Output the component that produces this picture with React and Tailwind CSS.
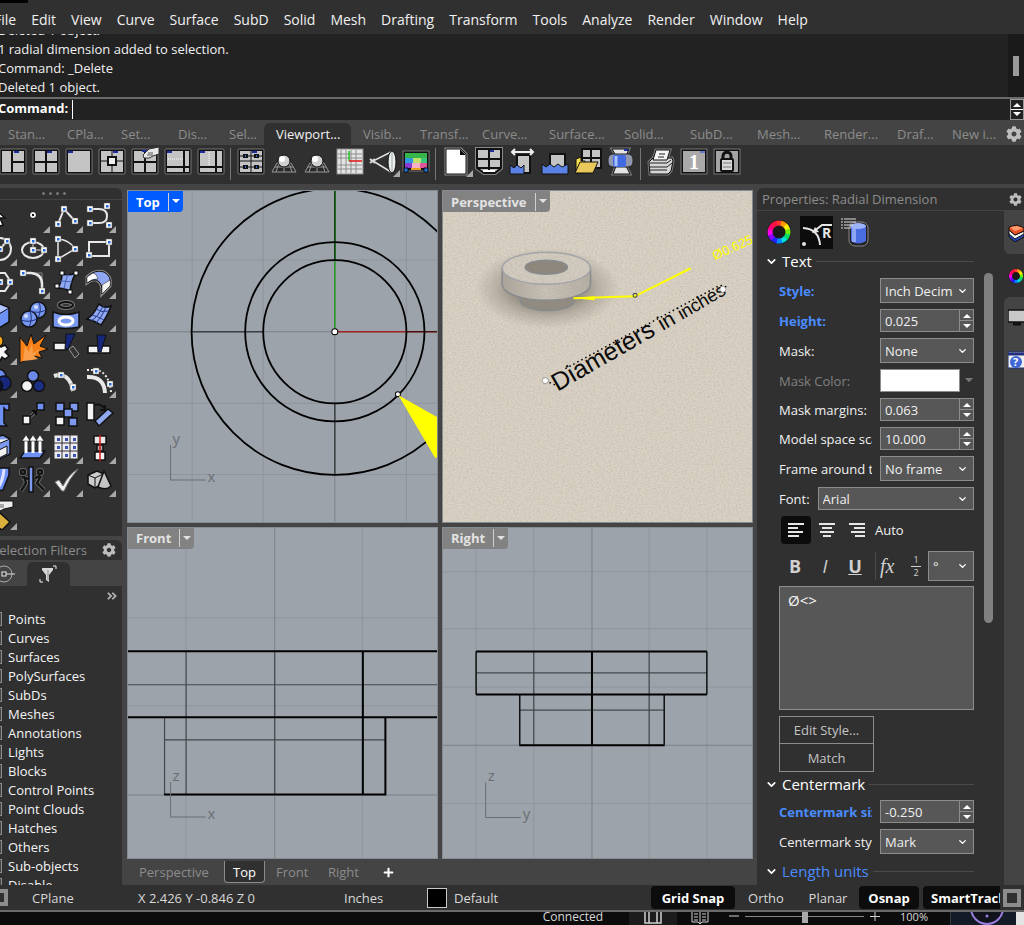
import React from "react";
import { FaCog, FaPlus, FaAngleDoubleRight } from "react-icons/fa";
import { ChevronDown } from "lucide-react";

const menuItems = [
  "File", "Edit", "View", "Curve", "Surface", "SubD", "Solid", "Mesh", "Drafting",
  "Transform", "Tools", "Analyze", "Render", "Window", "Help",
];

const toolbarTabs = [
  { label: "Stan...", width: "w-[59px]" },
  { label: "CPla...", width: "w-[54px]" },
  { label: "Set...", width: "w-[57px]" },
  { label: "Dis...", width: "w-[51px]" },
  { label: "Sel...", width: "w-[35px]" },
  { label: "Viewport...", width: "w-[87px]", active: true },
  { label: "Visib...", width: "w-[57px]" },
  { label: "Transf...", width: "w-[62px]" },
  { label: "Curve...", width: "w-[67px]" },
  { label: "Surface...", width: "w-[75px]" },
  { label: "Solid...", width: "w-[66px]" },
  { label: "SubD...", width: "w-[67px]" },
  { label: "Mesh...", width: "w-[67px]" },
  { label: "Render...", width: "w-[73px]" },
  { label: "Draf...", width: "w-[55px]" },
  { label: "New i...", width: "w-[54px]" },
];

const filters = [
  "Points", "Curves", "Surfaces", "PolySurfaces", "SubDs", "Meshes", "Annotations",
  "Lights", "Blocks", "Control Points", "Point Clouds", "Hatches", "Others",
  "Sub-objects", "Disable",
];

/* ---------- toolbar icons, 28 x 28 ---------- */

function Pane({ children, blue = "M11 3h5" }) {
  return (
    <>
      <rect x="1" y="1" width="26" height="25" rx="1" fill="#111" stroke="#777" />
      <rect x="3" y="3" width="22" height="21" fill="#c4c4c4" />
      <g stroke="#111" strokeWidth="2" fill="none">{children}</g>
      <path d={blue} stroke="#1c2f9c" strokeWidth="2" />
    </>
  );
}

const mainIcons = [
  { name: "Three viewports", art: <Pane blue="M15 4h5"><path d="M13 3v21M13 14h12" /></Pane> },
  { name: "Four viewports", art: <Pane blue="M15 4h5"><path d="M14 3v21M3 14h22" /></Pane> },
  { name: "Maximize viewport", art: <Pane blue="M3 4h5" /> },
  {
    name: "New viewport",
    art: (
      <Pane blue="M15 4h5">
        <path d="M14 3v21M3 13h22" strokeWidth="1" />
        <rect x="10" y="9" width="8" height="8" fill="#eee" />
      </Pane>
    ),
  },
  {
    name: "Viewport layout",
    art: (
      <>
        <Pane><path d="M14 3v21M3 14h22" /></Pane>
        <path d="M12 7l6-6 10-2v7l-6 2-4 2h-5z" fill="#e8e8e8" stroke="#333" />
        <path d="M16 7h6M17 5h5" stroke="#555" />
      </>
    ),
  },
  {
    name: "Split horizontally",
    art: (
      <Pane blue="M3 4h5">
        <path d="M20 3v21M3 19h22" />
        <path d="M4 11h15" stroke="#fff" strokeWidth="1" strokeDasharray="1 1" />
      </Pane>
    ),
  },
  {
    name: "Split vertically",
    art: (
      <Pane blue="M3 4h5">
        <path d="M19 3v21M3 19h22" />
        <path d="M12 4v14" stroke="#fff" strokeWidth="1" strokeDasharray="1 1" />
      </Pane>
    ),
  },
  null,
  {
    name: "Viewport properties",
    art: (
      <Pane blue="M15 4h5">
        <path d="M3 8h22M3 13h22M3 19h22M14 3v21" strokeWidth="1" />
        <path d="M6 8h5M17 8h5M6 19h5M17 19h5" strokeWidth="4" />
        <path d="M8 8h1M19 8h1M8 19h1M19 19h1" stroke="#3b6fd8" />
      </Pane>
    ),
  },
  { name: "Camera orbit", art: <OrbitBall /> },
  { name: "Camera target", art: <OrbitBall /> },
  {
    name: "Grid",
    art: (
      <>
        <rect x="1" y="1" width="26" height="25" fill="#e4e4e4" stroke="#888" />
        <path d="M5 2v23M10 2v23M15 2v23M20 2v23M2 6h24M2 10h24M2 17h24M2 21h24" stroke="#8c8c8c" />
        <path d="M13 3v10" stroke="#1fc51f" strokeWidth="1.500" />
        <path d="M13 13h13" stroke="#e01414" strokeWidth="1.500" />
      </>
    ),
  },
  {
    name: "Lens length",
    corner: true,
    art: (
      <>
        <path d="M22 4L4 13l18 11" stroke="#ddd" fill="none" strokeWidth="1.500" />
        <path d="M1 11l5 4M1 15l5-4" stroke="#ddd" strokeWidth="2" />
        <ellipse cx="23" cy="14" rx="4" ry="11" fill="#eee" stroke="#111" />
        <path d="M23 4v20" stroke="#9aa" />
      </>
    ),
  },
  {
    name: "Background bitmap",
    art: (
      <>
        <rect x="1" y="3" width="26" height="20" fill="#111" stroke="#777" />
        <rect x="3" y="5" width="22" height="5" fill="#35b54a" />
        <rect x="3" y="10" width="8" height="5" fill="#2f9adf" />
        <rect x="11" y="10" width="8" height="5" fill="#bfe26a" />
        <rect x="19" y="10" width="6" height="5" fill="#38c77c" />
        <rect x="3" y="15" width="7" height="5" fill="#8a3bd0" />
        <rect x="10" y="15" width="8" height="5" fill="#f3b3c4" />
        <rect x="18" y="15" width="7" height="5" fill="#e0559a" />
        <path d="M9 21h10" stroke="#e8a21c" strokeWidth="2" />
        <path d="M2 20h4v4H2zM22 20h4v4h-4z" fill="#1976e8" stroke="#111" />
      </>
    ),
  },
  null,
  {
    name: "New page",
    corner: true,
    art: (
      <>
        <path d="M4 1h15l5 5v20H4z" fill="#fff" stroke="#888" strokeWidth="3" />
        <path d="M4 1h15l5 5v20H4z" fill="#fff" stroke="#111" />
        <path d="M18 1v6h6" fill="#111" />
      </>
    ),
  },
  {
    name: "Four view page",
    art: (
      <>
        <path d="M2 1h24v19l-6 5H9l-7-5z" fill="none" stroke="#888" strokeWidth="4" />
        <path d="M2 1h24v19l-6 5H9l-7-5z" fill="#c4c4c4" stroke="#111" strokeWidth="2" />
        <path d="M14 1v21M2 11h24M2 20h24" stroke="#111" strokeWidth="2" />
        <path d="M15 3h4" stroke="#1c2f9c" strokeWidth="2" />
        <path d="M8 23h12" stroke="#fff" strokeWidth="2" />
      </>
    ),
  },
  {
    name: "Pan linked",
    art: (
      <>
        <rect x="9" y="7" width="13" height="18" fill="#c4c4c4" stroke="#111" strokeWidth="2" />
        <path d="M2 17l4 3 3-3 4 3 3-3v9H2z" fill="#5a82e6" stroke="#111" />
        <path d="M4 4h21M7 1L4 4l3 3M22 1l3 3-3 3" stroke="#eee" strokeWidth="2" fill="none" />
      </>
    ),
  },
  {
    name: "Page bounds",
    art: (
      <>
        <rect x="9" y="6" width="15" height="14" fill="#c4c4c4" stroke="#111" strokeWidth="2" />
        <path d="M1 16l4 3 4-3 4 3 4-3 4 3 6-3v10H1z" fill="#5a82e6" stroke="#111" />
      </>
    ),
  },
  {
    name: "Open layout",
    art: (
      <>
        <path d="M8 1h19v19H8z" fill="#c4c4c4" stroke="#111" strokeWidth="2" />
        <path d="M17 1v18M8 10h19" stroke="#111" strokeWidth="2" />
        <path d="M2 11l5-2v4h4v12H2z" fill="#f7e04c" stroke="#111" />
        <path d="M6 14h18l-5 11H1z" fill="#e9c85c" stroke="#111" />
      </>
    ),
  },
  {
    name: "Clip viewport",
    art: (
      <>
        <path d="M5 1h17l-3 7v10l4 8H6l3-8V8z" fill="#e4e4e4" stroke="#777" strokeWidth="3" />
        <path d="M5 1h17l-3 7v10l4 8H6l3-8V8z" fill="#e4e4e4" stroke="#111" />
        <rect x="1" y="6" width="25" height="13" rx="5" fill="#9298ac" stroke="#222" />
        <rect x="6" y="7" width="13" height="12" rx="2" fill="#4169e1" />
        <path d="M9 8v10" stroke="#a9c0ff" strokeWidth="3" />
        <path d="M17 2h4" stroke="#1c2f9c" strokeWidth="2" />
      </>
    ),
  },
  null,
  {
    name: "Print",
    art: (
      <>
        <path d="M9 2h14l-3 10H6z" fill="#f4f4f4" stroke="#777" strokeWidth="3" />
        <path d="M2 14l4-4h19l1 3-2 10-3 3H3z" fill="#d6d6d6" stroke="#777" strokeWidth="3" />
        <path d="M2 14l4-4h19l1 3-2 10-3 3H3z" fill="#d6d6d6" stroke="#111" />
        <path d="M9 2h14l-3 10H6z" fill="#f4f4f4" stroke="#111" />
        <path d="M3 15h17l4-3M3 19h17l5-4M3 22h17M12 6h6M11 9h6" stroke="#222" fill="none" />
      </>
    ),
  },
  {
    name: "One to one scale",
    art: (
      <>
        <rect x="1" y="1" width="26" height="25" fill="#111" stroke="#777" />
        <rect x="3" y="3" width="22" height="21" fill="#a9a9a9" />
        <text x="9" y="21" fontSize="20" fontWeight="700" fill="#fff" fontFamily="Liberation Serif, serif">1</text>
        <path d="M20 4h5" stroke="#1d49e0" />
      </>
    ),
  },
  {
    name: "Lock viewport",
    art: (
      <>
        <rect x="1" y="1" width="26" height="25" fill="#111" stroke="#777" />
        <rect x="3" y="3" width="22" height="21" fill="#a4a4a4" />
        <path d="M10 12V8c0-5 8-5 8 0v4" stroke="#111" strokeWidth="3" fill="none" />
        <rect x="8" y="11" width="12" height="12" rx="1" fill="#d8d8d8" stroke="#111" strokeWidth="2" />
        <path d="M10 15h8M10 19h8" stroke="#777" />
      </>
    ),
  },
];

function OrbitBall() {
  return (
    <>
      <path d="M7 15h14l5 9H2z" fill="#2a2a2a" stroke="#999" />
      <path d="M5 19h18M9 15l-3 9M14 15v9M19 15l3 9" stroke="#999" />
      <circle cx="14" cy="13" r="6" fill="#d0d0d0" stroke="#111" />
      <circle cx="12" cy="11" r="3" fill="#fff" />
    </>
  );
}

function Corner() {
  return <path d="M33 26v7h-7z" fill="#a8a8a8" />;
}

function Node({ x, y }) {
  return (
    <>
      <rect x={x - 3} y={y - 3} width="6" height="6" fill="#fff" stroke="#555" strokeWidth="0.500" />
      <rect x={x - 1} y={y - 1} width="2.500" height="2.500" fill="#2468d8" />
    </>
  );
}

/* ---------- side palette icons, 33 x 33 ---------- */

const line = { stroke: "#e8e8e8", strokeWidth: 2, fill: "none" };
const edge = { stroke: "#111", strokeWidth: 1.5 };

const paletteIcons = [
  [null, "Select", <path d="M10 8l11 10h-5l3 7-3 1-3-6-3 4z" fill="#fff" {...edge} />],
  [1, "Point", <><circle cx="16" cy="15" r="3.500" fill="#fff" stroke="#111" /><circle cx="16" cy="15" r="1.200" fill="#111" /></>],
  [1, "Polyline", <><path d="M8 24l6-15 11 12" {...line} /><Node x={8} y={24} /><Node x={14} y={9} /><Node x={25} y={21} /></>],
  [1, "Curve", <><path d="M7 9h9c6 0 8 3 8 7s-2 7-8 7H7" {...line} /><Node x={7} y={9} /><Node x={24} y={6} /><Node x={7} y={23} /><Node x={26} y={25} /></>],
  [1, "Circle", <><circle cx="16" cy="16" r="11" {...line} /><path d="M16 16l7-8" {...line} /><Node x={16} y={16} /><Node x={23} y={8} /></>],
  [1, "Ellipse", <><ellipse cx="16" cy="17" rx="11" ry="8" {...line} /><path d="M16 8v9h11" {...line} strokeWidth="1" /><Node x={16} y={17} /><Node x={16} y={8} /><Node x={27} y={17} /></>],
  [1, "Arc", <><path d="M8 26V6Q20 7 25 16L8 26" {...line} strokeWidth="1.500" /><Node x={8} y={6} /><Node x={25} y={16} /><Node x={8} y={26} /></>],
  [1, "Rectangle", <><rect x="6" y="9" width="20" height="14" {...line} /><Node x={26} y={9} /><Node x={6} y={22} /></>],
  [1, "Polygon", <><path d="M10 7h11l6 9-6 9H10l-5-9z" {...line} /><Node x={16} y={16} /><Node x={26} y={16} /></>],
  [1, "Fillet", <><path d="M8 7h17v16" stroke="#888" fill="none" /><path d="M6 7h8q11 1 11 11v7" {...line} strokeWidth="2.500" /><Node x={6} y={7} /><Node x={25} y={25} /></>],
  [1, "Surface", <>
    <path d="M12 8q7 2 14-1-5 8-6 18-6-3-12-3 4-7 4-14z" fill="#8fa8f0" {...edge} />
    <path d="M18 8q-3 8-4 15M10 15q6 0 12 1" stroke="#4560b8" fill="none" />
    {[[12, 7], [26, 7], [7, 20], [20, 26]].map(([x, y]) => <rect key={x} x={x - 2} y={y - 2} width="4" height="4" fill="#fff" stroke="#111" />)}
  </>],
  [1, "Sweep", <>
    <path d="M4 11q8-8 17-5 8 4 6 14l-8 8q1-12-6-14-4-1-9 3z" fill="#8fa6f2" stroke="#888" strokeWidth="3" />
    <path d="M4 11q8-8 17-5 8 4 6 14l-8 8q1-12-6-14-4-1-9 3z" fill="#8fa6f2" stroke="#111" />
    <path d="M4 11l6-4q4 1 5 6-5-1-11 4z" fill="#fff" stroke="#111" strokeWidth="0.500" />
    <path d="M19 19l8-5q1 3 0 6l-8 8z" fill="#f4f4f4" stroke="#111" strokeWidth="0.500" />
  </>],
  [1, "Box", <><path d="M6 11l10-6 9 4v14l-10 6-9-5z" fill="#6d90f5" {...edge} /><path d="M6 11l9 4 10-6M15 15v14" stroke="#111" fill="none" /><path d="M7 11l9-5 8 3-9 5z" fill="#b5c6ff" /></>],
  [1, "Sphere union", <>
    <circle cx="21" cy="11" r="8" fill="#7897ee" {...edge} /><circle cx="12" cy="20" r="8" fill="#7897ee" {...edge} />
    <path d="M13 12q8 3 16-1M22 3q3 8-1 16M4 21q8 3 16-1M13 12q3 8-1 16" stroke="#22357f" fill="none" />
    <circle cx="19" cy="8" r="2" fill="#d5deff" /><circle cx="9" cy="17" r="2" fill="#d5deff" />
  </>],
  [1, "Project", <>
    <ellipse cx="16" cy="6" rx="7" ry="3" fill="none" stroke="#777" strokeWidth="4" /><ellipse cx="16" cy="6" rx="7" ry="3" fill="none" stroke="#111" strokeWidth="2" />
    <path d="M3 13q13 5 26 0v15q-13 3-26 0z" fill="#7897ee" {...edge} />
    <ellipse cx="16" cy="22" rx="7" ry="4" fill="none" stroke="#fff" strokeWidth="3" />
  </>],
  [1, "Mesh", <><path d="M4 20q6-3 12-15 5 5 12 2-3 9-10 19-6-4-14-6z" fill="#8fa8f0" {...edge} /><path d="M8 22q7-4 12-15M13 24q6-6 10-16M13 10q6 4 12 2M9 16q5 1 12 5" stroke="#26398a" fill="none" /></>],
  [1, "Puzzle", <><circle cx="13" cy="9" r="6" fill="#f5a414" stroke="#111" /><path d="M9 14l5-3 3 4 4-2 3 4-3 3 4 4-4 3-3-2-2 4-5-2z" fill="#f4f4f4" {...edge} /></>],
  [null, "Explode", <><path d="M3 31L3 5l7 9 4-12 3 10 12-9-6 11 8 3-9 3 3 6-8-2z" fill="#f68018" stroke="#111" /><path d="M6 29l2-15 4 6 3-8 1 9 7-4-6 7 4 3-6 1z" fill="#fba04a" /></>],
  [null, "Trim", <><path d="M4 11h13v7H4z" fill="#f2f2f2" {...edge} /><path d="M16 2h9l-7 15h-3z" fill="#17277c" stroke="#111" /><path d="M19 17l4-3 6 8-4 4z" fill="#333" stroke="#999" /></>],
  [null, "Split", <><path d="M5 14h22v7H5z" fill="#f2f2f2" {...edge} /><path d="M14 3h9l-5 17h-3z" fill="#17277c" stroke="#111" /></>],
  [1, "Boolean", <><circle cx="14" cy="12" r="8" fill="#6d90f5" {...edge} /><circle cx="20" cy="18" r="7" fill="#17277c" {...edge} /><circle cx="12" cy="21" r="7" fill="#0b1026" stroke="#111" /></>],
  [null, "Group", <><circle cx="16" cy="11" r="5.500" fill="#6d8ae8" {...edge} /><circle cx="10" cy="21" r="5.500" fill="#f2f2f2" {...edge} /><circle cx="22" cy="21" r="5.500" fill="#1b2f86" {...edge} /></>],
  [null, "Edit points", <><path d="M4 11Q19 6 23 26" {...line} strokeWidth="4" /><Node x={11} y={10} /><Node x={23} y={22} /></>],
  [1, "Offset points", <><path d="M4 12q17-1 18 16" {...line} strokeWidth="4" /><path d="M4 5h10q12 3 14 22" stroke="#eee" fill="none" strokeDasharray="2 2" strokeWidth="2" /><Node x={13} y={6} /><Node x={27} y={19} /></>],
  [null, "Text object", <><path d="M6 6h19v6h-3l-2-2v15l3 3H12l3-3V10h-4l-2 3H6z" fill="#6d90f5" {...edge} /></>],
  [1, "Copy", <><path d="M10 22L22 10" stroke="#888" strokeWidth="3" /><path d="M10 22L22 10M15 13l5-1-1 5" stroke="#111" strokeWidth="1.500" /><rect x="6" y="18" width="7" height="8" fill="#f2f2f2" {...edge} /><rect x="20" y="5" width="7" height="7" fill="#6d90f5" {...edge} /></>],
  [null, "Array", <>{[[6, 5], [20, 5], [14, 11], [6, 19], [19, 20]].map(([x, y], i) => <rect key={i} x={x} y={y} width="8" height="8" fill={i === 3 ? "#f2f2f2" : "#7d9af0"} {...edge} />)}</>],
  [null, "Rotate", <><rect x="4" y="5" width="7" height="17" fill="#f2f2f2" {...edge} /><path d="M25 11l5 4-14 13-4-5z" fill="#8fa8f0" {...edge} /><path d="M12 7q6-2 10 4M22 7v5h-5" stroke="#111" strokeWidth="2" fill="none" /></>],
  [1, "Solid edit", <><path d="M5 9l14-5 7 4v15l-12 6-9-4z" fill="#7d9af0" {...edge} /><path d="M15 19l8-4v8l-8 4zM5 9l9 4 12-5" fill="#f2f2f2" stroke="#111" /></>],
  [1, "Extrude", <><path d="M8 20h20l-5 7H3z" fill="#6d90f5" {...edge} /><path d="M9 22V8M16 22V8M23 22V8" stroke="#fff" strokeWidth="3" /><path d="M5 10l4-6 4 6zM12 10l4-6 4 6zM19 10l4-6 4 6z" fill="#fff" stroke="#111" strokeWidth="0.500" /></>],
  [1, "Grid array", <>{[0, 1, 2].map((r) => [0, 1, 2].map((c) => <g key={r * 3 + c}><rect x={5 + c * 8} y={5 + r * 8} width="6" height="6" fill="#e9e9f5" stroke="#eee" /><rect x={7 + c * 8} y={7 + r * 8} width="3" height="3" fill="#3b50b0" /></g>))}</>],
  [1, "Align", <><rect x="11" y="5" width="12" height="8" fill="#e8e8e8" {...edge} /><rect x="14" y="14" width="6" height="6" fill="#aaa" {...edge} /><rect x="12" y="21" width="10" height="8" fill="#f2f2f2" {...edge} /><path d="M17 4v26" stroke="#d01818" strokeWidth="1.500" /></>],
  [1, "Bend", <><path d="M12 4h13v7l-6 15-7 1-7-7q7-6 7-16z" fill="#6d90f5" {...edge} /><path d="M20 5q-1 14-8 21" stroke="#dbe3ff" strokeWidth="3" fill="none" /></>],
  [1, "Analyze", <>
    <g stroke="#777" strokeWidth="4" fill="none"><circle cx="6" cy="8" r="2" /><circle cx="23" cy="8" r="2" /><path d="M5 13l7 2M7 12l2 7-5 8M24 12l-4 7 7 7M18 14l5-2" /></g>
    <g stroke="#161616" strokeWidth="2.500" fill="none"><circle cx="6" cy="8" r="2" /><circle cx="23" cy="8" r="2" /><path d="M5 13l7 2M7 12l2 7-5 8M24 12l-4 7 7 7M18 14l5-2" /></g>
    <rect x="12" y="3" width="4" height="25" fill="#7d9af0" {...edge} />
  </>],
  [1, "Check", <path d="M5 18l4-2 4 6q6-12 15-17-9 10-14 22h-2z" fill="#f0f0f0" stroke="#777" />],
  [1, "Shaded solids", <><path d="M5 11l9-4 7 3v9l-9 5-7-4z" fill="#ccc" {...edge} /><path d="M5 11l7 3 8-4M12 14v9" stroke="#111" fill="none" /><path d="M21 7l7 15q-5 5-13 1z" fill="#c4c4c4" {...edge} /></>],
  [1, "Pick tool", <><path d="M7 26l9-10 10 9-8 8z" fill="#d9b03c" {...edge} /><path d="M10 9l6-5h13v6l-9 2-4 2z" fill="#eee" stroke="#111" /><path d="M14 8h6M15 10h5" stroke="#666" /></>],
];

/* ---------- small shared bits ---------- */

function Caret({ className }) {
  return (
    <svg viewBox="0 0 10 6" className={className} aria-hidden="true">
      <path d="M0 0h10L5 5z" fill="currentColor" />
    </svg>
  );
}

function ColorWheel({ className }) {
  const hues = ["#f33", "#f90", "#fe0", "#7e0", "#0d6", "#0dd", "#08f", "#22f", "#80f", "#f0e", "#f07", "#f14"];
  return (
    <svg viewBox="-13 -13 26 26" className={className} aria-hidden="true">
      <circle r="12" fill="#181818" />
      {hues.map((h, i) => (
        <path key={h} d="M-2.700 -8.600A9 9 0 0 1 2.700 -8.600" stroke={h} strokeWidth="5" fill="none" transform={`rotate(${i * 30})`} />
      ))}
    </svg>
  );
}

function SectionTitle({ children, color = "text-white" }) {
  return (
    <h3 className={`flex h-6 items-center gap-1 pl-2 text-[15px] ${color}`}>
      <ChevronDown size={13} strokeWidth={3} className="shrink-0 text-white" />
      <span className="shrink-0">{children}</span>
      <span className="h-px flex-1 bg-[#4a4a4a]" />
    </h3>
  );
}

function Field({ id, label, labelColor = "text-[#f0f0f0]", children }) {
  return (
    <div className="flex items-center gap-2">
      <label htmlFor={id} className={`w-[93px] shrink-0 overflow-hidden whitespace-nowrap ${labelColor}`}>
        {label}
      </label>
      {children}
    </div>
  );
}

function Picker({ id, value, height = "h-[25px]", label }) {
  return (
    <div className="relative min-w-0 flex-1">
      <select
        id={id}
        aria-label={label}
        className={`block w-full appearance-none overflow-hidden border border-[#8c8c8c] bg-[#575757] pr-5 pl-1 text-[#f0f0f0] ${height}`}
      >
        <option>{value}</option>
      </select>
      <ChevronDown size={11} strokeWidth={3} className="pointer-events-none absolute top-1/2 right-1.5 -translate-y-1/2 text-white" />
    </div>
  );
}

function Spinner({ id, value }) {
  return (
    <div className="flex h-[23px] min-w-0 flex-1 border border-[#8c8c8c] bg-[#575757]">
      <input id={id} type="text" defaultValue={value} className="w-0 flex-1 pl-1 text-[#f0f0f0] outline-none" />
      <div className="flex w-3.5 flex-col border-l border-[#8c8c8c]">
        <button aria-label="Increase" className="flex flex-1 items-center justify-center border-b border-[#8c8c8c]">
          <Caret className="h-[5px] w-2 rotate-180 text-white" />
        </button>
        <button aria-label="Decrease" className="flex flex-1 items-center justify-center">
          <Caret className="h-[5px] w-2 text-white" />
        </button>
      </div>
    </div>
  );
}

/* ---------- viewports ---------- */

function Viewport({ title, active, viewBox, children }) {
  return (
    <section className="relative min-h-0 min-w-0 overflow-hidden border border-[#858b92] bg-[#9ca3ab]">
      <svg viewBox={viewBox} preserveAspectRatio="xMinYMin slice" className="block h-full w-full">
        {children}
      </svg>
      <button
        className={`absolute top-0 left-0 flex h-[21px] items-center rounded-br-sm font-bold ${
          active ? "bg-[#005cff] text-white" : "bg-[#828282] text-[#e2e2e2]"
        }`}
      >
        <span className="px-2">{title}</span>
        <span className="flex h-[18px] items-center border-l border-[#d0d0d0] px-[3px]">
          <Caret className="h-[5px] w-2" />
        </span>
      </button>
    </section>
  );
}

function AxisMark({ x, y, h, v }) {
  return (
    <>
      <path d={`M${x} ${y - 35}v35h35`} stroke="#6b6f74" fill="none" />
      <text x={x + 2} y={y - 36} fontSize="15" fill="#6b6f74">{v}</text>
      <text x={x + 37} y={y + 2} fontSize="15" fill="#6b6f74">{h}</text>
    </>
  );
}

function TopView() {
  return (
    <Viewport title="Top" active viewBox="128 192 310 330">
      <path d="M192 192v330M263 192v330M406 192v330M128 261h310M128 404h310M128 475h310" stroke="#8e959c" />
      <path d="M334.500 192v330M128 332.500h310" stroke="#7c8187" />
      <path d="M192 332.500h71M334.500 404v71" stroke="#3c3f42" strokeWidth="1.500" />
      <path d="M334.500 192v140" stroke="#239a23" strokeWidth="1.500" />
      <path d="M334.500 192v70" stroke="#0b400b" strokeWidth="1.500" />
      <path d="M334.500 332.500h72" stroke="#9d2323" strokeWidth="1.500" />
      <path d="M406 332.500h32" stroke="#520b0b" strokeWidth="1.500" />
      <g fill="none" stroke="#000" strokeWidth="1.800">
        <circle cx="334.500" cy="332.500" r="143" />
        <circle cx="334.500" cy="332.500" r="89.500" />
        <circle cx="334.500" cy="332.500" r="71.500" />
      </g>
      <circle cx="334.500" cy="332.500" r="3" fill="#fff" stroke="#000" />
      <circle cx="397.500" cy="395" r="2.500" fill="#fff" stroke="#000" />
      <path d="M398 396l41 23v35l-4 5z" fill="#ff0" />
      <AxisMark x={170.5} y={480.5} h="x" v="y" />
    </Viewport>
  );
}

function PerspectiveView() {
  return (
    <Viewport title="Perspective" viewBox="444 192 308 330">
      <defs>
        <filter id="paper" x="0" y="0" width="100%" height="100%">
          <feTurbulence type="fractalNoise" baseFrequency="0.500 0.700" numOctaves="3" seed="4" />
          <feColorMatrix values="0 0 0 0 0.350  0 0 0 0 0.310  0 0 0 0 0.250  0.600 0 0 0 -0.210" />
        </filter>
        <radialGradient id="shadow">
          <stop offset="0.300" stopColor="#3a342c" stopOpacity="0.600" />
          <stop offset="0.700" stopColor="#3a342c" stopOpacity="0.200" />
          <stop offset="1" stopColor="#3a342c" stopOpacity="0" />
        </radialGradient>
        <linearGradient id="rim">
          <stop offset="0" stopColor="#aba69d" />
          <stop offset="0.500" stopColor="#c9c2b6" />
          <stop offset="1" stopColor="#b5afa5" />
        </linearGradient>
      </defs>
      <rect x="444" y="192" width="308" height="330" fill="#dad2c4" />
      <ellipse cx="548" cy="289" rx="72" ry="40" fill="url(#shadow)" />
      <g stroke="#85898e" strokeWidth="1.500">
        <path d="M521 294v7a27 10 0 0 0 54 0v-7z" fill="#8f897f" />
        <path d="M503 269v16a44 16 0 0 0 88 0v-16z" fill="url(#rim)" />
        <ellipse cx="547" cy="269" rx="44" ry="16" fill="#d3ccc0" stroke="#a2a5ab" />
        <ellipse cx="547" cy="268" rx="21" ry="7" fill="#8b857b" />
      </g>
      <rect x="444" y="192" width="308" height="330" filter="url(#paper)" />
      <path d="M574 299l61-2 56-28" stroke="#ff0" strokeWidth="2" fill="none" />
      <path d="M574 299l21-2v4z" fill="#ff0" />
      <circle cx="635.500" cy="296" r="2" fill="none" stroke="#444" />
      <text x="715" y="261" fontSize="13" fill="#ff0" fontFamily="Liberation Sans, sans-serif" transform="rotate(-24 715 261)">Ø0.625</text>
      <g fontFamily="Liberation Sans, sans-serif" fill="#0a0a0a" transform="rotate(-30 560 391)">
        <text x="558" y="391">
          <tspan fontSize="25">Diameters </tspan>
          <tspan fontSize="21">in </tspan>
          <tspan fontSize="18">inches</tspan>
        </text>
      </g>
      <path d="M546 381l20 9M566 369L720 286l8 2" stroke="#000" strokeWidth="1.500" fill="none" strokeDasharray="1.500 3" />
      <circle cx="546" cy="381" r="3" fill="#fff" stroke="#555" strokeWidth="0.500" />
      <circle cx="723" cy="290" r="3" fill="#fff" stroke="#555" strokeWidth="0.500" />
    </Viewport>
  );
}

function FrontView() {
  return (
    <Viewport title="Front" viewBox="128 528 310 330">
      <path d="M186 528v330M362 528v330M128 617.500h310M128 705.500h310" stroke="#8e959c" />
      <path d="M274.500 528v330M128 794.500h310" stroke="#7c8187" />
      <path d="M186 651v143M128 684.500h310M164.500 717v77M164 739.500h221M274.500 651v143" stroke="#45484c" strokeWidth="1.200" fill="none" />
      <path d="M128 651h310M128 717h310M362.500 651v143M164 794h221v-77" stroke="#000" strokeWidth="2" fill="none" />
      <AxisMark x={170.5} y={816.5} h="x" v="z" />
    </Viewport>
  );
}

function RightView() {
  return (
    <Viewport title="Right" viewBox="444 528 308 330">
      <path d="M477 528v330M534.500 528v330M649.500 528v330M707 528v330M444 571.500h308M444 628.500h308M444 686.500h308M444 802.500h308" stroke="#8e959c" />
      <path d="M592.500 528v330M444 744.500h308" stroke="#7c8187" />
      <path d="M534.500 651v93M649.500 651v93M477 672.500h230M520 709.500h145" stroke="#45484c" strokeWidth="1.200" />
      <path d="M477 651v43M707 651v43M520.500 694v50M664.500 694v50" stroke="#111" strokeWidth="1.500" />
      <path d="M477 651h230M477 694h230M520 744.500h145M592.500 651v93" stroke="#000" strokeWidth="2" />
      <AxisMark x={486.5} y={816.5} h="y" v="z" />
    </Viewport>
  );
}

/* ---------- page regions ---------- */

function MenuBar() {
  return (
    <header className="h-[34px] shrink-0 overflow-hidden bg-[#303030] text-[#f0f0f0]">
      <div className="flex h-1 items-start">
        <span className="h-[3px] w-7 bg-black" />
      </div>
      <nav className="-ml-1.5 flex h-8 items-center gap-[15px] text-sm">
        {menuItems.map((item) => (
          <button key={item} className="shrink-0">{item}</button>
        ))}
      </nav>
    </header>
  );
}

function CommandArea() {
  return (
    <div className="shrink-0 bg-[#222] text-[#f0f0f0]">
      <div className="flex h-[63px]">
        <div className="-ml-1 flex flex-1 flex-col justify-end overflow-hidden pl-0.5 leading-[19px]">
          <p>Deleted 1 object.</p>
          <p>1 radial dimension added to selection.</p>
          <p>Command: _Delete</p>
          <p>Deleted 1 object.</p>
        </div>
        <div className="flex w-4 justify-center bg-[#1a1a1a] pt-[22px]">
          <span className="h-5 w-1.5 bg-[#9a9a9a]" />
        </div>
      </div>
      <div className="flex h-[23px] border-t-2 border-[#6a6a6a]">
        <label htmlFor="command" className="-ml-0.5 leading-[18px] font-bold text-white">Command:</label>
        <input id="command" type="text" className="my-px ml-1 min-w-0 flex-1 border-l border-white outline-none" />
        <div className="flex w-3.5 flex-col border border-[#999]">
          <button aria-label="Previous" className="flex flex-1 items-center justify-center border-b border-white">
            <Caret className="h-[5px] w-2 rotate-180 text-white" />
          </button>
          <button aria-label="Next" className="flex flex-1 items-center justify-center">
            <Caret className="h-[5px] w-2 text-white" />
          </button>
        </div>
      </div>
    </div>
  );
}

function Toolbar() {
  return (
    <div className="shrink-0">
      <div className="flex h-[25px] bg-[#444] pt-[3px] pl-2 text-[#8c8c8c]">
        {toolbarTabs.map((tab) => (
          <button
            key={tab.label}
            className={`shrink-0 text-left whitespace-nowrap ${tab.width} ${
              tab.active ? "mr-3 rounded-t-md bg-[#303030] pl-3 text-[#f0f0f0]" : ""
            }`}
          >
            {tab.label}
          </button>
        ))}
        <button aria-label="Toolbar options" className="text-[#bdbdbd]">
          <FaCog size={16} />
        </button>
      </div>
      <div className="-ml-1 flex h-[39px] bg-[#303030] pt-[3px]">
        {mainIcons.map((item, i) =>
          item ? (
            <button key={item.name} title={item.name} className="flex w-[33px] shrink-0 justify-center">
              <svg viewBox="0 0 28 28" className="h-7 w-7 overflow-visible">
                {item.art}
                {item.corner && <path d="M31 22v7h-7z" fill="#a8a8a8" />}
              </svg>
            </button>
          ) : (
            <span key={i} className="flex w-[7px] shrink-0 justify-center">
              <span className="h-8 w-px bg-[#777]" />
            </span>
          )
        )}
      </div>
    </div>
  );
}

function LeftColumn() {
  return (
    <aside className="flex w-[122px] shrink-0 flex-col gap-1 overflow-hidden pt-1">
      <div className="h-[348px] shrink-0 rounded-tr-md bg-[#303030]">
        <div className="flex h-3 items-center justify-end gap-1 border-b border-[#444] pr-14">
          {[0, 1, 2, 3].map((d) => (
            <span key={d} className="h-[3px] w-[3px] shrink-0 rounded-full bg-[#777]" />
          ))}
        </div>
        <div className="-ml-4 flex w-[132px] flex-wrap">
          {paletteIcons.map(([corner, name, art]) => (
            <button key={name} title={name} className="h-[33px] w-[33px]">
              <svg viewBox="0 0 33 33" className="h-[33px] w-[33px]">
                {art}
                {corner && <Corner />}
              </svg>
            </button>
          ))}
        </div>
      </div>

      <div className="flex min-h-0 flex-1 flex-col overflow-hidden rounded-tr-md bg-[#303030]">
        <div className="-ml-2 flex h-5 shrink-0 items-center justify-between pr-1.5 text-[#8c8c8c]">
          <h2>Selection Filters</h2>
          <FaCog size={14} className="text-[#bdbdbd]" />
        </div>
        <div className="flex h-[26px] shrink-0 bg-[#444] pt-0.5">
          <button aria-label="Object snaps" className="w-[27px]">
            <svg viewBox="0 0 27 24" className="h-6 w-[27px]">
              <circle cx="4" cy="12" r="8" fill="none" stroke="#aaa" />
              <path d="M4 12h11" stroke="#ddd" />
              <rect x="2" y="10" width="4" height="4" fill="#333" stroke="#eee" />
            </svg>
          </button>
          <button aria-label="Selection filter" className="w-[43px] rounded-t-md bg-[#303030] pl-3">
            <svg viewBox="0 0 18 18" className="h-[18px] w-[18px]">
              <path d="M3 3h11v2l-4 5v7l-3-2v-5L3 5z" fill="#d8d8d8" />
              <path d="M9 5v10" stroke="#888" />
              <path d="M14 1h3v3M1 14v3h3" stroke="#eee" fill="none" />
            </svg>
          </button>
        </div>
        <div className="flex h-[23px] shrink-0 items-start justify-end pt-1 pr-1">
          <FaAngleDoubleRight size={12} className="text-[#aaa]" />
        </div>
        <div className="text-[#f5f5f5]">
          {filters.map((f) => (
            <label key={f} className="-ml-3 flex h-[19px] items-center gap-1.5">
              <input type="checkbox" className="h-[14px] w-[14px] shrink-0 appearance-none border border-[#8c8c8c] bg-[#444]" />
              <span className="whitespace-nowrap">{f}</span>
            </label>
          ))}
        </div>
      </div>
    </aside>
  );
}

function ViewportArea() {
  return (
    <main className="flex min-w-0 flex-1 flex-col pt-[6px] pr-1 pl-[5px]">
      <div className="grid min-h-0 flex-1 grid-cols-2 grid-rows-2 gap-1">
        <TopView />
        <PerspectiveView />
        <FrontView />
        <RightView />
      </div>
      <div className="flex h-[26px] shrink-0 items-start pt-0.5 pl-3 text-[#8c8c8c]">
        <button className="h-[22px] w-[85px] text-left">Perspective</button>
        <button className="h-[22px] w-[41px] rounded-b border border-t-0 border-[#8c8c8c] bg-[#303030] text-white">Top</button>
        <button className="h-[22px] w-[52px] pl-[11px] text-left">Front</button>
        <button className="h-[22px] w-[66px] pl-[11px] text-left">Right</button>
        <button aria-label="Add viewport" className="flex h-[22px] items-center">
          <FaPlus size={11} className="text-white" />
        </button>
      </div>
    </main>
  );
}

function AlignIcon({ d }) {
  return (
    <svg viewBox="0 0 16 14" className="h-[14px] w-4" aria-hidden="true">
      <path d={d} stroke="#e6e6e6" strokeWidth="2" />
    </svg>
  );
}

function PropertiesPanel() {
  return (
    <aside className="flex w-[267px] shrink-0 flex-col pt-1">
      <div className="flex h-[23px] shrink-0 items-center rounded-tl-md border-b border-[#444] bg-[#303030] pl-[5px] text-[#8c8c8c]">
        <h2 className="flex-1">Properties: Radial Dimension</h2>
        <FaCog size={13} className="mr-0.5 text-[#bdbdbd]" />
      </div>
      <div className="flex min-h-0 flex-1">
        <div className="flex min-w-0 flex-1 flex-col overflow-hidden bg-[#303030]">
          <div className="flex h-[38px] shrink-0 items-center gap-2 pt-1 pl-[9px]">
            <button aria-label="Display"><ColorWheel className="h-[26px] w-[26px]" /></button>
            <button aria-label="Radial dimension" className="bg-[#0c0c0c]">
              <svg viewBox="0 0 33 33" className="h-[33px] w-[33px]">
                <path d="M3 12q16 1 17 17M13 16l9-7h10" stroke="#e4e4e4" strokeWidth="2" fill="none" />
                <path d="M12 17l3-6 4 5z" fill="#e4e4e4" />
                <circle cx="4" cy="28" r="2" fill="#e4e4e4" />
                <text x="22" y="22" fontSize="14" fontWeight="700" fill="#e4e4e4">R</text>
              </svg>
            </button>
            <button aria-label="Attributes">
              <svg viewBox="0 0 30 30" className="h-[30px] w-[30px]">
                <rect x="8" y="5" width="19" height="24" rx="6" fill="#222" stroke="#888" />
                <path d="M10 9v15q7 5 15 0V9z" fill="#4a6de0" />
                <path d="M13 10v15" stroke="#8ea6f8" strokeWidth="4" />
                <ellipse cx="17" cy="9" rx="8" ry="3" fill="#9db4f8" />
                <path d="M0 2h15M0 5h15M0 8h12M0 11h10" stroke="#ddd" strokeDasharray="2 1 20 0" />
              </svg>
            </button>
          </div>
          <div className="flex min-h-0 flex-1">
            <div className="min-w-0 flex-1">
              <SectionTitle>Text</SectionTitle>
              <div className="flex flex-col gap-1.5 pt-[5px] pl-[22px]">
                <Field id="style" label="Style:" labelColor="font-bold text-[#4a8cff]">
                  <Picker id="style" value="Inch Decimal" />
                </Field>
                <Field id="height" label="Height:" labelColor="font-bold text-[#4a8cff]">
                  <Spinner id="height" value="0.025" />
                </Field>
                <Field id="mask" label="Mask:"><Picker id="mask" value="None" /></Field>
                <Field id="maskcolor" label="Mask Color:" labelColor="text-[#808080]">
                  <button id="maskcolor" className="flex h-[23px] flex-1 items-center text-[#777]">
                    <span className="mr-1 h-full flex-1 border border-[#8c8c8c] bg-white" />
                    <Caret className="h-[5px] w-2.5" />
                  </button>
                </Field>
                <Field id="margins" label="Mask margins:"><Spinner id="margins" value="0.063" /></Field>
                <Field id="scale" label="Model space scale:"><Spinner id="scale" value="10.000" /></Field>
                <Field id="frame" label="Frame around text:"><Picker id="frame" value="No frame" /></Field>
                <div className="flex items-center gap-2">
                  <label htmlFor="font" className="text-[#f0f0f0]">Font:</label>
                  <Picker id="font" value="Arial" height="h-[23px]" />
                </div>
                <div className="flex h-7 items-center text-[#f0f0f0]">
                  <button aria-label="Align left" className="mr-2 ml-0.5 flex h-7 w-[30px] items-center justify-center rounded bg-[#0c0c0c]">
                    <AlignIcon d="M0 1h16M0 5h10M0 9h15M0 13h11" />
                  </button>
                  <button aria-label="Align center" className="mr-3.5">
                    <AlignIcon d="M0 1h16M3 5h10M1 9h14M4 13h8" />
                  </button>
                  <button aria-label="Align right" className="mr-2.5">
                    <AlignIcon d="M0 1h16M5 5h11M2 9h14M6 13h10" />
                  </button>
                  <button>Auto</button>
                </div>
                <div className="flex h-[30px] items-center pt-0.5 text-[#d0d0d0]">
                  <button className="w-8 text-lg font-bold">B</button>
                  <button className="w-7 text-lg italic">I</button>
                  <button className="w-8 text-lg font-bold underline">U</button>
                  <span className="ml-1 h-7 w-px bg-[#4a4a4a]" />
                  <button className="w-7 pl-1 text-left font-[Liberation_Serif,serif] text-xl italic">fx</button>
                  <button aria-label="Fraction" className="flex w-6 shrink-0 flex-col items-center text-[9px] leading-3">
                    <span className="border-b border-[#d0d0d0] px-0.5">1</span>
                    <span>2</span>
                  </button>
                  <Picker label="Symbol" value="°" height="h-[30px]" />
                </div>
                <textarea
                  aria-label="Dimension text"
                  defaultValue="Ø<>"
                  className="h-[124px] resize-none border border-[#8c8c8c] bg-[#575757] px-2 py-[3px] text-[15px] text-[#f5f5f5] outline-none"
                />
                <div className="flex w-[95px] flex-col text-[#c4c4c4]">
                  <button className="h-7 border border-[#8c8c8c]">Edit Style...</button>
                  <button className="h-7 border border-t-0 border-[#8c8c8c]">Match</button>
                </div>
              </div>
              <SectionTitle>Centermark</SectionTitle>
              <div className="flex flex-col gap-1.5 pt-1 pb-[5px] pl-[22px]">
                <Field id="cmsize" label="Centermark size:" labelColor="font-bold text-[#4a8cff]">
                  <Spinner id="cmsize" value="-0.250" />
                </Field>
                <Field id="cmstyle" label="Centermark style:"><Picker id="cmstyle" value="Mark" /></Field>
              </div>
              <SectionTitle color="text-[#4a8cff]">Length units</SectionTitle>
            </div>
            <div className="w-[30px] shrink-0 pt-6 pl-2.5">
              <div className="h-[350px] w-[9px] rounded-full bg-[#808080]" />
            </div>
          </div>
        </div>
        <div className="flex w-5 shrink-0 flex-col overflow-hidden bg-[#303030]">
          <button aria-label="Properties" className="flex h-[43px] shrink-0 items-center rounded-bl-md bg-[#444] pl-1">
            <svg viewBox="0 0 16 18" className="h-[18px] w-4">
              <path d="M1 9l6 5 9-5v4l-9 5-6-5z" fill="#2346b8" stroke="#111" />
              <path d="M1 6l6 5 9-4v3l-9 5-6-5z" fill="#f0f0f0" stroke="#111" />
              <path d="M1 3l8-2 7 3v3l-9 4-6-5z" fill="#e8532a" stroke="#111" />
              <path d="M2 3l7-1 6 2-8 3z" fill="#ff9a6c" />
            </svg>
          </button>
          <button aria-label="Materials" className="flex h-[43px] shrink-0 items-center pl-1">
            <ColorWheel className="h-4 w-4" />
          </button>
          <div className="flex-1 rounded-tl-md bg-[#444] pt-3 pl-1">
            <button aria-label="Display" className="block">
              <svg viewBox="0 0 16 18" className="h-[18px] w-4">
                <rect x="0" y="1" width="17" height="12" fill="#c8c8c8" stroke="#111" strokeWidth="1.500" />
                <path d="M5 15h8" stroke="#111" strokeWidth="3" />
              </svg>
            </button>
            <button aria-label="Help" className="mt-6 block">
              <svg viewBox="0 0 16 18" className="h-[18px] w-4">
                <rect x="0" y="1" width="17" height="16" fill="#f0f0f0" stroke="#23307c" />
                <path d="M0 3h16" stroke="#23307c" strokeWidth="3" />
                <circle cx="8" cy="11" r="6" fill="#3f66d8" />
                <text x="5" y="15" fontSize="11" fontWeight="700" fill="#fff">?</text>
              </svg>
            </button>
          </div>
        </div>
      </div>
    </aside>
  );
}

function StatusBar() {
  return (
    <footer className="flex h-[27px] shrink-0 items-center border-b-2 border-[#6a6a6a] bg-[#303030] text-[#d8d8d8]">
      <span className="h-[17px] w-2 border-4 border-l-0 border-[#8c8c8c]" />
      <button className="w-[130px] pl-6 text-left">CPlane</button>
      <span className="w-[206px]">X 2.426 Y -0.846 Z 0</span>
      <button className="w-[83px] text-left">Inches</button>
      <button className="flex items-center gap-[7px]">
        <span className="h-5 w-5 border border-[#c8c8c8] bg-black" />
        Default
      </button>
      <div className="ml-auto flex h-6 items-center">
        <button className="h-[23px] w-[84px] rounded bg-[#0c0c0c] font-bold text-white">Grid Snap</button>
        <button className="w-[62px]">Ortho</button>
        <button className="w-[62px]">Planar</button>
        <button className="mr-1 h-[23px] w-[60px] rounded bg-[#0c0c0c] font-bold text-white">Osnap</button>
        <button className="h-[23px] w-[77px] overflow-hidden rounded-l bg-[#0c0c0c] pl-2 text-left font-bold whitespace-nowrap text-white">
          SmartTrack
        </button>
        <button aria-label="Toggle sidebar" className="mr-[3px] ml-[3px] h-[18px] w-[18px] border-4 border-[#8c8c8c] bg-[#303030]" />
      </div>
    </footer>
  );
}

function HostBar() {
  return (
    <div className="flex h-[13px] shrink-0 items-start justify-end overflow-hidden bg-[#0c0c0c] text-[11px] leading-[10px] text-[#d8d8d8]">
      <span className="mr-[26px] text-xs leading-[10px]">Connected</span>
      <span className="mr-2 flex h-full w-12 justify-center bg-[#1c1c1c]">
        <svg viewBox="0 0 18 13" className="h-[13px] w-[18px]">
          <path d="M1 0v11h16V0M5 0v11M13 0v11" stroke="#d0d0d0" strokeWidth="1.500" fill="none" />
        </svg>
      </span>
      <svg viewBox="0 0 18 13" className="mr-9 ml-1.5 h-[13px] w-[18px]">
        <path d="M1 0v10h6l2 2 2-2h6V0M9 0v11M3 2h4M3 5h4M3 8h4M11 2h4M11 5h4M11 8h4" stroke="#d0d0d0" fill="none" />
      </svg>
      <svg viewBox="0 0 10 10" className="-ml-4 mr-1.5 h-2.5 w-2.5" aria-hidden="true">
        <path d="M0 4h10" stroke="#d0d0d0" />
      </svg>
      <input
        type="range"
        aria-label="Zoom"
        className="mt-1 h-px w-[119px] appearance-none bg-[#888] [&::-webkit-slider-thumb]:h-3 [&::-webkit-slider-thumb]:w-1.5 [&::-webkit-slider-thumb]:appearance-none [&::-webkit-slider-thumb]:bg-[#aaa]"
      />
      <svg viewBox="0 0 10 10" className="mr-5 ml-1.5 h-2.5 w-2.5" aria-hidden="true">
        <path d="M0 4.500h10M5 0v9" stroke="#d0d0d0" />
      </svg>
      <span className="mr-[22px]">100%</span>
      <svg viewBox="0 0 66 13" className="h-[13px] w-[66px]">
        <rect width="66" height="13" fill="#131c26" />
        <circle cx="37" cy="-4" r="16" fill="#10121c" stroke="#9a7fe0" strokeWidth="2" />
        <circle cx="37" cy="4" r="1.500" fill="#9a7fe0" />
        <path d="M0 0v13" stroke="#555" />
      </svg>
      <span className="h-full w-2 bg-[#e4e4e4]" />
    </div>
  );
}

export default function App() {
  return (
    <div className="flex h-screen w-full flex-col overflow-hidden bg-[#444] font-['Open_Sans','Noto_Sans',sans-serif] text-[13px] leading-5">
      <MenuBar />
      <CommandArea />
      <Toolbar />
      <div className="flex min-h-0 flex-1">
        <LeftColumn />
        <ViewportArea />
        <PropertiesPanel />
      </div>
      <StatusBar />
      <HostBar />
    </div>
  );
}
